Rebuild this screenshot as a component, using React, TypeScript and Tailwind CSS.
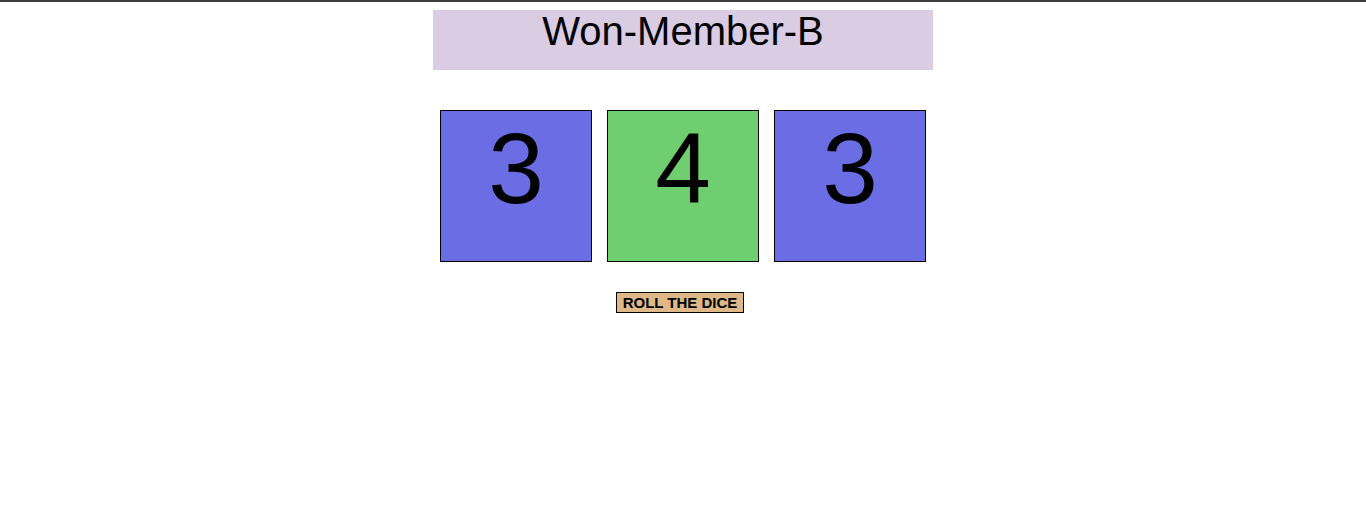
const dice = [
  { value: 3, color: "bg-[#6b6de5]" },
  { value: 4, color: "bg-[#6fce6f]" },
  { value: 3, color: "bg-[#6b6de5]" },
];

export default function App() {
  return (
    <div className="min-h-screen bg-white font-['Liberation_Sans',Arial,sans-serif] text-black">
      <div className="h-[2px] bg-[#3d3d3d]" />

      {/* Title */}
      <div className="mx-auto mt-[8px] h-[60px] w-[500px] bg-[#d9cce3] text-center text-[40px] leading-[42px]">
        Won-Member-B
      </div>

      {/* Dice */}
      <div className="mt-[40px] flex justify-center gap-[15px]">
        {dice.map((d, i) => (
          <div
            key={i}
            className={`h-[152px] w-[152px] border border-black text-center text-[100px] leading-[115px] ${d.color}`}
          >
            {d.value}
          </div>
        ))}
      </div>

      <div className="mt-[30px] flex justify-center">
        <button className="mr-[6px] h-[21px] w-[128px] border border-black bg-[#deb887] text-[15px] font-bold leading-none">
          ROLL THE DICE
        </button>
      </div>
    </div>
  );
}
